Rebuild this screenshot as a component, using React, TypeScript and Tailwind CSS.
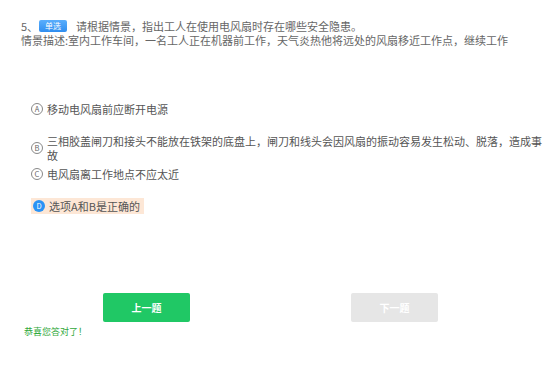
import React from 'react';

const options = [
  { key: 'A', text: '移动电风扇前应断开电源', cls: 'mt-[55px]' },
  { key: 'B', text: '三相胶盖闸刀和接头不能放在铁架的底盘上，闸刀和线头会因风扇的振动容易发生松动、脱落，造成事故', cls: 'mt-[18px]' },
  { key: 'C', text: '电风扇离工作地点不应太近', cls: 'mt-[5px]' },
];

export default function App() {
  return (
    <div
      className="w-[557px] h-[368px] bg-white text-[#666] overflow-hidden"
      style={{ fontFamily: '"Noto Sans CJK SC", "Noto Sans", sans-serif' }}
    >
      <div className="pt-[19px] pl-[21px] pr-[4px] text-[11px] leading-[14px]">
        <div className="flex items-center h-[14px]">
          <span>5、</span>
          <span className="ml-[1px] w-[28px] h-[12px] rounded-[2px] bg-gradient-to-b from-[#5aaefc] to-[#2f8ef0] text-white text-[8px] leading-[12px] text-center">
            单选
          </span>
          <span className="ml-[9px]">请根据情景，指出工人在使用电风扇时存在哪些安全隐患。</span>
        </div>
        <div className="mt-[0px]">情景描述:室内工作车间，一名工人正在机器前工作，天气炎热他将远处的风扇移近工作点，继续工作</div>

        <div className="pl-[10px]">
          {options.map((o) => (
            <div key={o.key} className={`flex items-center ${o.cls}`}>
              <span className="shrink-0 w-[12px] h-[12px] rounded-full border border-[#888] text-[#666] text-[7.5px] leading-[10px] flex items-center justify-center">
                {o.key}
              </span>
              <span className="ml-[4px] w-[498px] text-[#555]">{o.text}</span>
            </div>
          ))}
          <div className="mt-[17px] inline-flex items-center bg-[#fde7d6] pl-[2px] pr-[4px] h-[16px]">
            <span className="shrink-0 w-[12px] h-[12px] rounded-full bg-[#2b93f5] text-white text-[7.5px] leading-[12px] flex items-center justify-center">
              D
            </span>
            <span className="ml-[4px] text-[#555]">选项A和B是正确的</span>
          </div>
        </div>
      </div>

      <div className="mt-[79px] flex pl-[103px] gap-[161px]">
        <button className="w-[87px] h-[29px] rounded-[2px] bg-[#20c865] text-white text-[10px] font-bold">
          上一题
        </button>
        <button className="w-[87px] h-[29px] rounded-[2px] bg-[#e6e6e6] text-white text-[10px] font-bold">
          下一题
        </button>
      </div>
      <div className="mt-[5px] pl-[24px] text-[9px] leading-[10px] text-[#2fa83a]">恭喜您答对了！</div>
    </div>
  );
}
